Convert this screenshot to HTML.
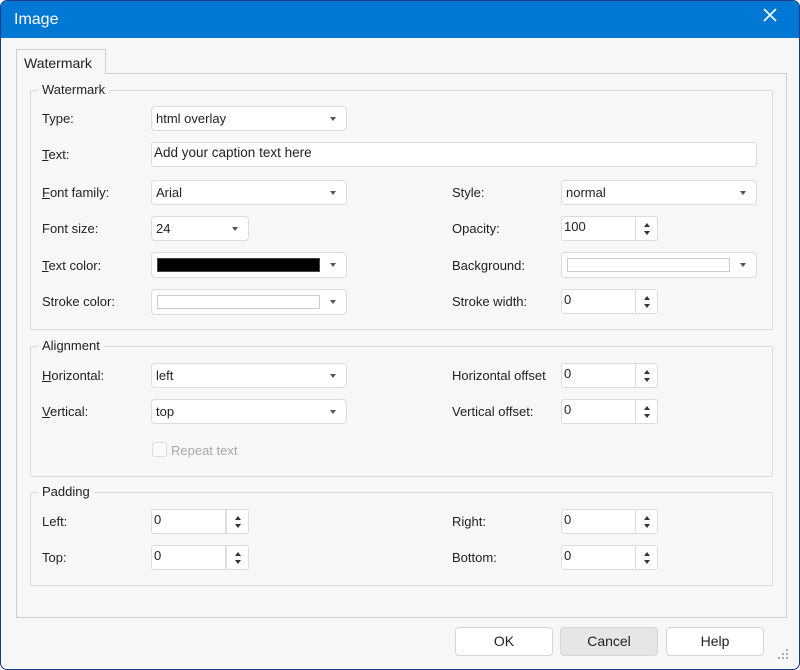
<!DOCTYPE html>
<html><head><style>
*{box-sizing:border-box}
body{margin:0;width:800px;height:670px;overflow:hidden;background:#fff;font-family:"Liberation Sans",Arial,sans-serif;font-size:13px;color:#222}
#win{position:absolute;left:0;top:0;width:800px;height:670px;background:#f7f7f7;border:1px solid #1a3c8c;border-radius:7px;overflow:hidden}
#title{position:absolute;left:0;top:0;width:800px;height:37px;background:#0078d4;color:#fff;font-size:16px;line-height:38px;padding-left:13px}
#x{position:absolute;right:24px;top:7px}
.a{position:absolute}
.lbl{position:absolute;left:41px;line-height:16px}
.r{left:451px}
.panel{position:absolute;left:15px;top:72px;width:771px;height:545px;border:1px solid #d0d0d0;background:#f7f7f7}
.tab{position:absolute;left:15px;top:48px;width:90px;height:25px;border:1px solid #d0d0d0;border-bottom:none;background:#f7f7f7;padding:5px 0 0 7px;font-size:14px;z-index:2}
.fs{position:absolute;left:29px;width:743px;border:1px solid #dcdcdc;border-radius:2px}
.leg{position:absolute;left:7px;top:-9px;background:#f7f7f7;padding:0 4px;line-height:16px}
.sel{position:absolute;height:25px;background:#fff;border:1px solid #dcdcdc;border-radius:4px;padding-left:4px;line-height:23px}
.sel:after{content:"";position:absolute;right:10px;top:10px;border-left:3.5px solid transparent;border-right:3.5px solid transparent;border-top:4px solid #555}
.inp{position:absolute;height:25px;background:#fff;border:1px solid #dcdcdc;border-radius:3px 0 0 3px;padding-left:2px;line-height:20px}
.sp{position:absolute;width:23px;height:25px;background:#fff;border:1px solid #dcdcdc;border-radius:0 3px 3px 0}
.sp:before{content:"";position:absolute;left:8px;top:6px;border-left:3px solid transparent;border-right:3px solid transparent;border-bottom:4px solid #333}
.sp:after{content:"";position:absolute;left:8px;top:14px;border-left:3px solid transparent;border-right:3px solid transparent;border-top:4px solid #333}
.sw{position:absolute;left:5px;top:5px;height:14px;border:1px solid #ccc}
.btn{position:absolute;top:626px;width:98px;height:29px;background:#fff;border:1px solid #d6d6d6;border-radius:4px;text-align:center;line-height:27px;font-size:14px}
u{text-decoration:underline}
</style></head><body>
<div id="win">
<div id="title">Image<svg id="x" width="14" height="14" viewBox="0 0 14 14"><path d="M1 1L13 13M13 1L1 13" stroke="#fff" stroke-width="1.6"/></svg></div>
<div class="tab">Watermark</div>
<div class="panel"></div>

<div class="fs" style="top:89px;height:240px"><div class="leg">Watermark</div></div>
<div class="fs" style="top:345px;height:131px"><div class="leg">Alignment</div></div>
<div class="fs" style="top:491px;height:94px"><div class="leg">Padding</div></div>

<div class="lbl" style="top:110px">Type:</div>
<div class="sel" style="left:150px;top:105px;width:196px">html overlay</div>
<div class="lbl" style="top:146px"><u>T</u>ext:</div>
<div class="inp" style="left:150px;top:141px;width:606px;border-radius:3px;font-size:13.5px">Add your caption text here</div>

<div class="lbl" style="top:184px"><u>F</u>ont family:</div>
<div class="sel" style="left:150px;top:179px;width:196px">Arial</div>
<div class="lbl r" style="top:184px">Style:</div>
<div class="sel" style="left:560px;top:179px;width:196px">normal</div>

<div class="lbl" style="top:220px">Font size:</div>
<div class="sel" style="left:150px;top:215px;width:98px">24</div>
<div class="lbl r" style="top:220px">Opacity:</div>
<div class="inp" style="left:560px;top:215px;width:75px">100</div><div class="sp" style="left:634px;top:215px"></div>

<div class="lbl" style="top:257px"><u>T</u>ext color:</div>
<div class="sel" style="left:150px;top:251px;width:196px;height:26px"><div class="sw" style="width:163px;background:#000;border-color:#444"></div></div>
<div class="lbl r" style="top:257px">Background:</div>
<div class="sel" style="left:560px;top:251px;width:196px;height:26px"><div class="sw" style="width:163px;background:#fff"></div></div>

<div class="lbl" style="top:293px">Stroke color:</div>
<div class="sel" style="left:150px;top:288px;width:196px;height:26px"><div class="sw" style="width:163px;background:#fff"></div></div>
<div class="lbl r" style="top:293px">Stroke width:</div>
<div class="inp" style="left:560px;top:288px;width:75px">0</div><div class="sp" style="left:634px;top:288px"></div>

<div class="lbl" style="top:367px"><u>H</u>orizontal:</div>
<div class="sel" style="left:150px;top:362px;width:196px">left</div>
<div class="lbl r" style="top:367px">Horizontal offset</div>
<div class="inp" style="left:560px;top:362px;width:75px">0</div><div class="sp" style="left:634px;top:362px"></div>

<div class="lbl" style="top:403px"><u>V</u>ertical:</div>
<div class="sel" style="left:150px;top:398px;width:196px">top</div>
<div class="lbl r" style="top:403px">Vertical offset:</div>
<div class="inp" style="left:560px;top:398px;width:75px">0</div><div class="sp" style="left:634px;top:398px"></div>

<div class="a" style="left:151px;top:441px;width:15px;height:15px;border:1px solid #ddd;border-radius:3px;background:#fafafa"></div>
<div class="a" style="left:170px;top:442px;color:#a8a8a8;line-height:16px">Repeat text</div>

<div class="lbl" style="top:513px">Left:</div>
<div class="inp" style="left:150px;top:508px;width:75px">0</div><div class="sp" style="left:225px;top:508px"></div>
<div class="lbl r" style="top:513px">Right:</div>
<div class="inp" style="left:560px;top:508px;width:75px">0</div><div class="sp" style="left:634px;top:508px"></div>

<div class="lbl" style="top:549px">Top:</div>
<div class="inp" style="left:150px;top:544px;width:75px">0</div><div class="sp" style="left:225px;top:544px"></div>
<div class="lbl r" style="top:549px">Bottom:</div>
<div class="inp" style="left:560px;top:544px;width:75px">0</div><div class="sp" style="left:634px;top:544px"></div>

<div class="btn" style="left:454px">OK</div>
<div class="btn" style="left:559px;background:#e6e6e6">Cancel</div>
<div class="btn" style="left:665px">Help</div>
<svg class="a" style="left:777px;top:648px" width="12" height="12"><g fill="#aaa"><rect x="8" y="0" width="2" height="2"/><rect x="4" y="4" width="2" height="2"/><rect x="8" y="4" width="2" height="2"/><rect x="0" y="8" width="2" height="2"/><rect x="4" y="8" width="2" height="2"/><rect x="8" y="8" width="2" height="2"/></g></svg>
</div>
</body></html>
